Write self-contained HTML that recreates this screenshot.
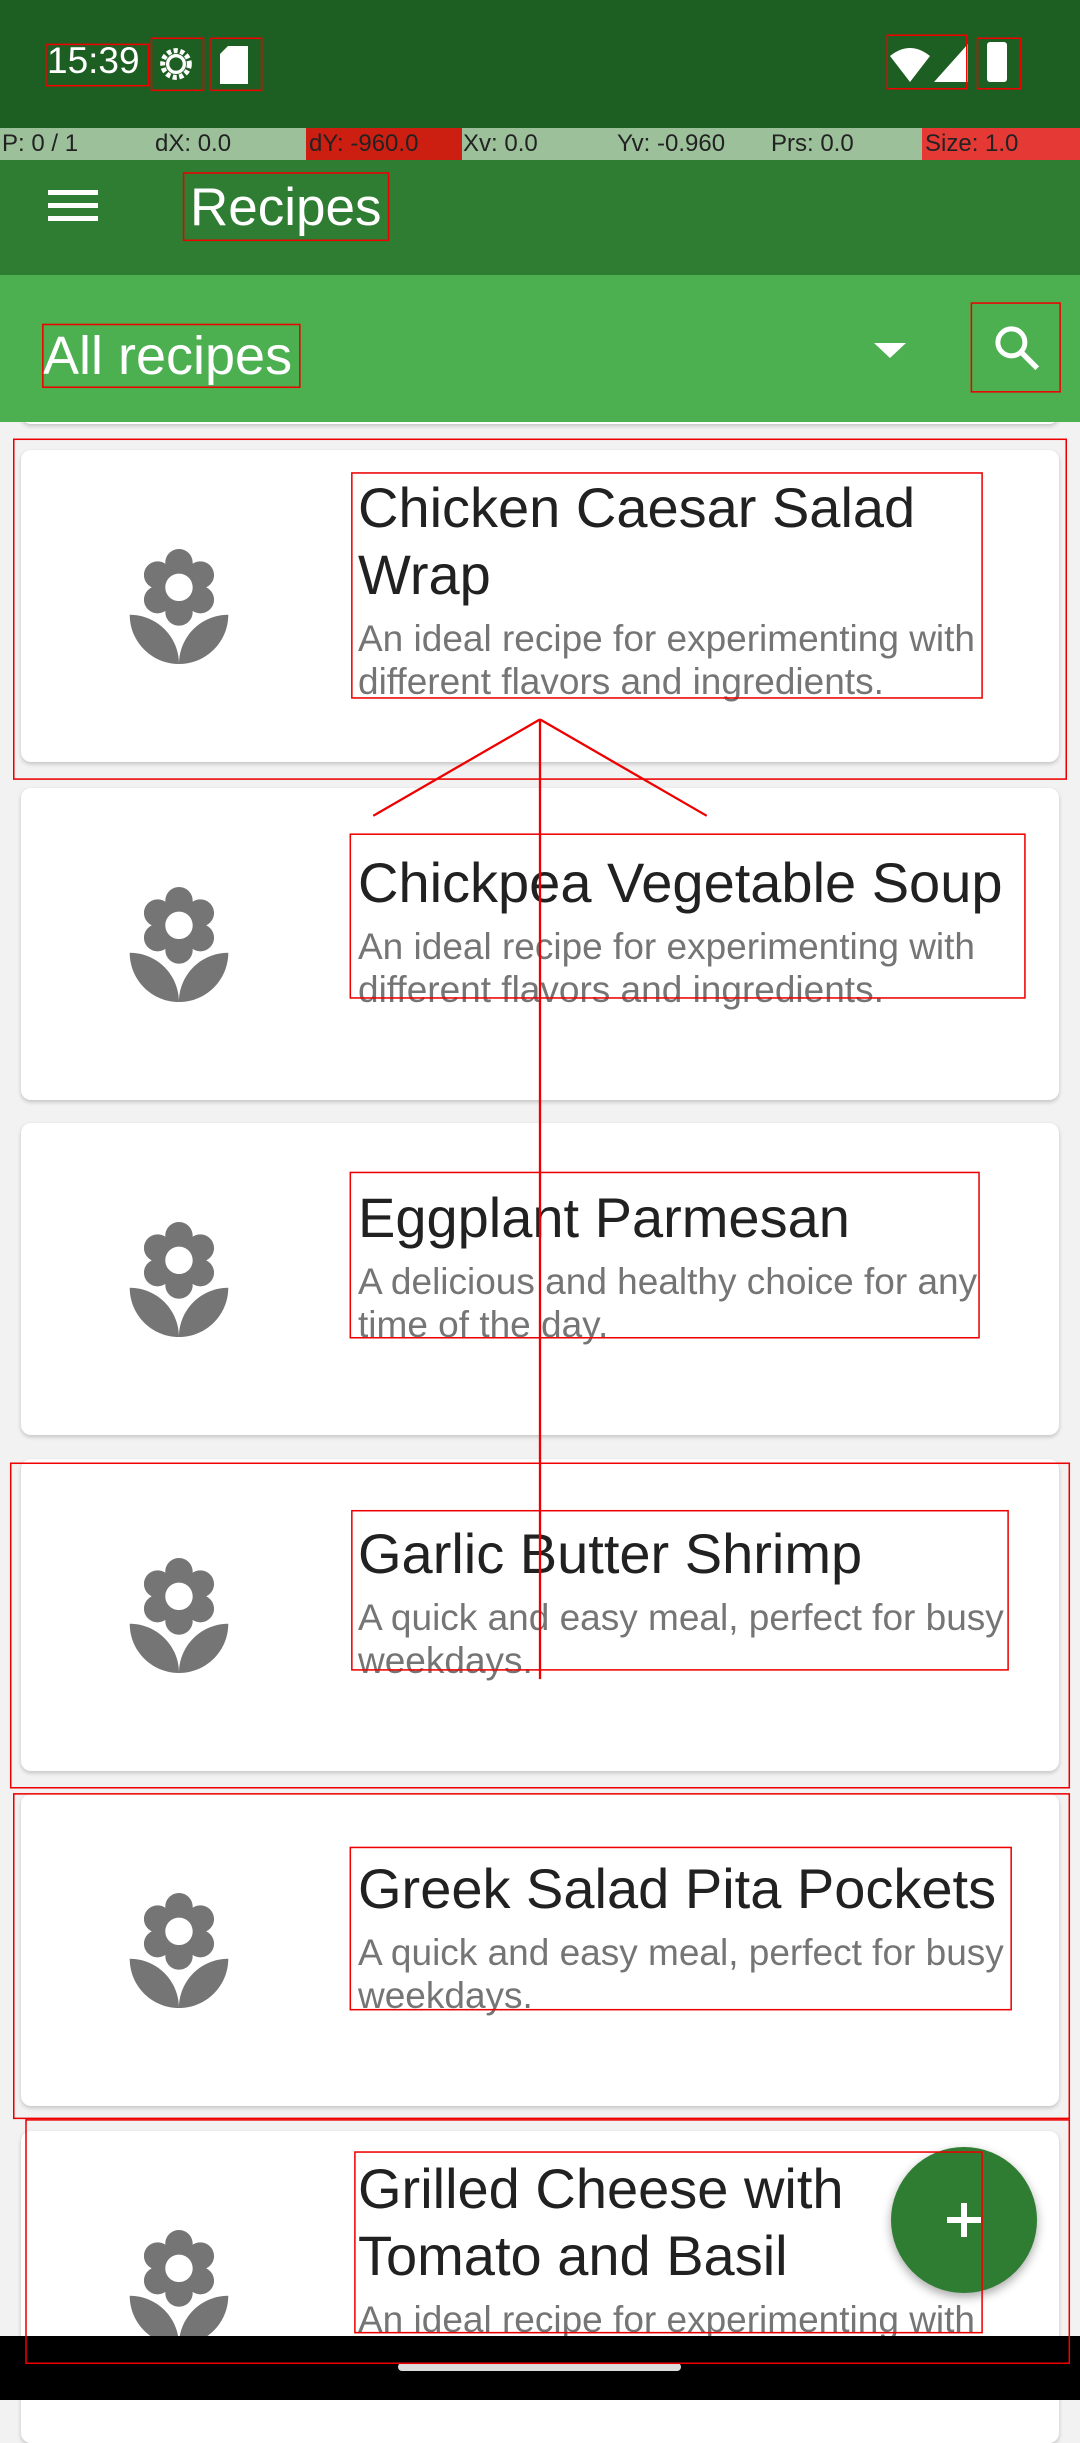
<!DOCTYPE html>
<html><head><meta charset="utf-8"><style>
*{margin:0;padding:0;box-sizing:border-box}
body{width:1080px;height:2400px;overflow:hidden;background:#f2f2f2;font-family:"Liberation Sans",sans-serif;position:relative}
.status{position:absolute;top:0;left:0;width:1080px;height:128px;background:#1d5e23}
.debug{position:absolute;top:128px;left:0;width:1080px;height:32px;background:#9bc09a;font-size:24px;color:#222;font-family:"Liberation Sans Narrow","Liberation Sans",sans-serif}
.debug span{position:absolute;top:2px}
.toolbar{position:absolute;top:160px;left:0;width:1080px;height:115px;background:#2e7d32}
.spin{position:absolute;top:275px;left:0;width:1080px;height:147px;background:#4caf50}
.card{position:absolute;left:21px;width:1038px;height:312px;background:#fff;border-radius:10px;box-shadow:0 2px 4px rgba(0,0,0,.2)}
.card svg.fl{position:absolute;left:108px;top:50%;margin-top:-57px}
.txt{position:absolute;left:337px;width:682px}
.t{font-size:56px;line-height:67px;color:#212121}
.d{font-size:37px;line-height:43px;color:#757575;margin-top:9px}
.nav{position:absolute;top:2336px;left:0;width:1080px;height:64px;background:#000}
</style></head><body>
<svg width="0" height="0" style="position:absolute"><defs><symbol id="fl" viewBox="3 1 18 21"><path fill="#757575" d="M12 22c4.97 0 9-4.03 9-9-4.97 0-9 4.03-9 9zM5.6 10.25c0 1.38 1.12 2.5 2.5 2.5.53 0 1.01-.16 1.42-.44l-.02.19c0 1.38 1.12 2.5 2.5 2.5s2.5-1.12 2.5-2.5l-.02-.19c.4.28.89.44 1.42.44 1.38 0 2.5-1.12 2.5-2.5 0-1-.59-1.85-1.43-2.25.84-.4 1.43-1.25 1.43-2.25 0-1.38-1.12-2.5-2.5-2.5-.53 0-1.01.16-1.42.44l.02-.19C14.5 2.12 13.38 1 12 1S9.5 2.12 9.5 3.5l.02.19c-.4-.28-.89-.44-1.42-.44-1.38 0-2.5 1.12-2.5 2.5 0 1 .59 1.85 1.43 2.25-.84.4-1.43 1.25-1.43 2.25zM12 5.5c1.38 0 2.5 1.12 2.5 2.5s-1.12 2.5-2.5 2.5S9.5 9.38 9.5 8s1.12-2.5 2.5-2.5zM3 13c0 4.97 4.03 9 9 9 0-4.97-4.03-9-9-9z"/></symbol></defs></svg>

<div class="card" style="top:112px"></div>

<div class="status">
<div style="position:absolute;left:47px;top:40px;color:#fff;font-size:37px">15:39</div>
<svg style="position:absolute;left:156px;top:44px" width="40" height="40" viewBox="0 0 24 24"><circle cx="12" cy="12" r="8" fill="none" stroke="#fff" stroke-width="3" stroke-dasharray="2.5 1.5"/><circle cx="12" cy="12" r="5" fill="none" stroke="#fff" stroke-width="2"/></svg>
<svg style="position:absolute;left:220px;top:46px" width="28" height="38" viewBox="0 0 14 19"><path d="M4 0H14V19H0V4Z" fill="#fff"/></svg>
<svg style="position:absolute;left:890px;top:46px" width="40" height="36" viewBox="0 0 20 18"><path d="M0 5Q10-3 20 5L10 18Z" fill="#fff"/></svg>
<svg style="position:absolute;left:934px;top:44px" width="34" height="38" viewBox="0 0 17 19"><path d="M17 0V19H0Z" fill="#fff"/></svg>
<div style="position:absolute;left:987px;top:42px;width:20px;height:40px;background:#fff;border-radius:3px"></div>
</div>
<div class="debug">
<div style="position:absolute;left:306px;width:156px;height:32px;background:#cc1f12"></div>
<div style="position:absolute;left:922px;width:158px;height:32px;background:#e53935"></div>
<span style="left:2px">P: 0 / 1</span><span style="left:155px">dX: 0.0</span><span style="left:309px">dY: -960.0</span><span style="left:463px">Xv: 0.0</span><span style="left:617px">Yv: -0.960</span><span style="left:771px">Prs: 0.0</span><span style="left:925px">Size: 1.0</span>
</div>
<div class="toolbar">
<div style="position:absolute;left:48px;top:30px;width:50px;height:5px;background:#fff"></div>
<div style="position:absolute;left:48px;top:43px;width:50px;height:5px;background:#fff"></div>
<div style="position:absolute;left:48px;top:56px;width:50px;height:5px;background:#fff"></div>
<div style="position:absolute;left:190px;top:17px;color:#fff;font-size:53px">Recipes</div>
</div>
<div class="spin">
<div style="position:absolute;left:43px;top:50px;color:#fff;font-size:54px">All recipes</div>
<div style="position:absolute;left:874px;top:68px;border-left:16px solid transparent;border-right:16px solid transparent;border-top:15px solid #fff"></div>
<svg style="position:absolute;left:990px;top:46px" width="54" height="54" viewBox="0 0 24 24"><circle cx="9.5" cy="9.5" r="6" fill="none" stroke="#fff" stroke-width="2.2"/><path d="M14 14L21 21" stroke="#fff" stroke-width="2.4"/></svg>
</div>

<div class="card" style="top:450px"><svg class="fl" width="100" height="115"><use href="#fl"/></svg><div class="txt" style="top:24px"><div class="t">Chicken Caesar Salad Wrap</div><div class="d">An ideal recipe for experimenting with different flavors and ingredients.</div></div></div>
<div class="card" style="top:788px"><svg class="fl" width="100" height="115"><use href="#fl"/></svg><div class="txt" style="top:61px"><div class="t">Chickpea Vegetable Soup</div><div class="d">An ideal recipe for experimenting with different flavors and ingredients.</div></div></div>
<div class="card" style="top:1123px"><svg class="fl" width="100" height="115"><use href="#fl"/></svg><div class="txt" style="top:61px"><div class="t">Eggplant Parmesan</div><div class="d">A delicious and healthy choice for any time of the day.</div></div></div>
<div class="card" style="top:1459px"><svg class="fl" width="100" height="115"><use href="#fl"/></svg><div class="txt" style="top:61px"><div class="t">Garlic Butter Shrimp</div><div class="d">A quick and easy meal, perfect for busy weekdays.</div></div></div>
<div class="card" style="top:1794px"><svg class="fl" width="100" height="115"><use href="#fl"/></svg><div class="txt" style="top:61px"><div class="t">Greek Salad Pita Pockets</div><div class="d">A quick and easy meal, perfect for busy weekdays.</div></div></div>
<div class="card" style="top:2131px"><svg class="fl" width="100" height="115"><use href="#fl"/></svg><div class="txt" style="top:24px"><div class="t">Grilled Cheese with Tomato and Basil</div><div class="d">An ideal recipe for experimenting with different flavors and ingredients.</div></div></div>

<div style="position:absolute;left:891px;top:2147px;width:146px;height:146px;border-radius:50%;background:#2e7d32;box-shadow:0 4px 10px rgba(0,0,0,.35)">
<div style="position:absolute;left:56px;top:70px;width:34px;height:6px;background:#fff"></div>
<div style="position:absolute;left:70px;top:56px;width:6px;height:34px;background:#fff"></div></div>
<div class="nav"><div style="position:absolute;left:398px;top:27px;width:283px;height:8px;border-radius:4px;background:#ddd"></div></div>

<svg style="position:absolute;left:0;top:0" width="1080" height="2400" viewBox="0 0 706 1568" preserveAspectRatio="none" fill="none" stroke="#e00" stroke-width="1">
<rect x="30" y="29" width="67" height="27"/><rect x="99" y="25" width="34" height="34"/><rect x="138" y="25" width="33" height="34"/>
<rect x="580" y="23" width="52" height="35"/><rect x="639" y="25" width="28" height="33"/>
<rect x="120" y="113" width="134" height="44"/><rect x="28" y="212" width="168" height="41"/><rect x="635" y="198" width="58" height="58"/>
<rect x="9" y="287" width="688" height="222"/><rect x="230" y="309" width="412" height="147"/>
<rect x="229" y="545" width="441" height="107"/><rect x="229" y="766" width="411" height="108"/>
<rect x="7" y="956" width="692" height="212"/><rect x="230" y="987" width="429" height="104"/>
<rect x="9" y="1172" width="690" height="212"/><rect x="229" y="1207" width="432" height="106"/>
<rect x="17" y="1385" width="682" height="159"/><rect x="232" y="1406" width="410" height="118"/>
<path d="M353 470V1097M353 470L244 533M353 470L462 533" stroke-width="1.5"/>
</svg>
</body></html>
